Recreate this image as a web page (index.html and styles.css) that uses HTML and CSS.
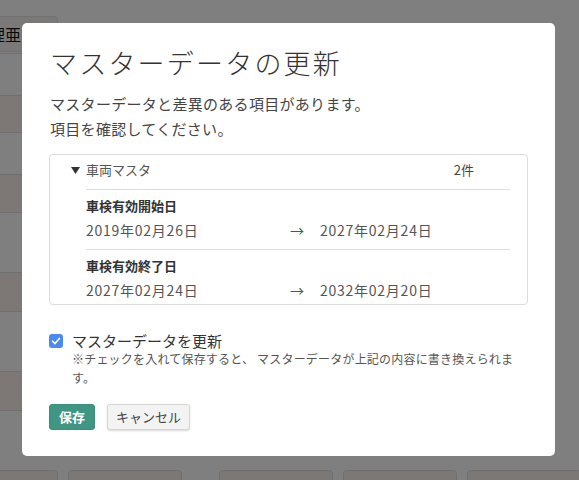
FILE: index.html
```html
<!DOCTYPE html>
<html lang="ja">
<head>
<meta charset="utf-8">
<title>マスターデータの更新</title>
<link rel="stylesheet" href="styles.css">
</head>
<body>
<div class="page">
  <div class="toolbar">
    <div class="bg-btn">整理亜</div>
  </div>
  <div class="table">
    <div class="row r42"></div>
    <div class="row r37 alt"></div>
    <div class="row r42"></div>
    <div class="row r38 alt"></div>
    <div class="row r60"></div>
    <div class="row r39 alt"></div>
    <div class="row r60"></div>
    <div class="row r39 alt"></div>
    <div class="row r50"></div>
  </div>
  <div class="bottom-bar">
    <div class="bb bb-first"></div>
    <div class="bb"></div>
    <div class="bb bb-spaced"></div>
    <div class="bb"></div>
    <div class="bb"></div>
  </div>
</div>

<div class="overlay"></div>

<div class="modal">
  <h1 class="title">マスターデータの更新</h1>
  <p class="desc">マスターデータと差異のある項目があります。<br>項目を確認してください。</p>

  <div class="diff-box">
    <div class="diff-head">
      <svg class="caret" width="9" height="7" viewBox="0 0 9 7"><polygon points="0,0 9,0 4.5,7" fill="#333"/></svg>
      <span class="group">車両マスタ</span>
      <span class="count">2件</span>
    </div>
    <div class="diff-list">
      <div class="diff-item">
        <div class="field">車検有効開始日</div>
        <div class="values">
          <span class="old">2019年02月26日</span>
          <span class="arrow">→</span>
          <span class="new">2027年02月24日</span>
        </div>
      </div>
      <div class="diff-item">
        <div class="field">車検有効終了日</div>
        <div class="values">
          <span class="old">2027年02月24日</span>
          <span class="arrow">→</span>
          <span class="new">2032年02月20日</span>
        </div>
      </div>
    </div>
  </div>

  <div class="check">
    <span class="checkbox">
      <svg width="14" height="14" viewBox="0 0 14 14"><polyline points="3.6,7.2 6,9.6 10.4,4.4" fill="none" stroke="#fff" stroke-width="1.6" stroke-linecap="round" stroke-linejoin="round"/></svg>
    </span>
    <div class="check-text">
      <div class="check-label">マスターデータを更新</div>
      <div class="check-note">※チェックを入れて保存すると、 マスターデータが上記の内容に書き換えられます。</div>
    </div>
  </div>

  <div class="actions">
    <button class="btn btn-save">保存</button>
    <button class="btn btn-cancel">キャンセル</button>
  </div>
</div>
</body>
</html>
```

FILE: styles.css
```css
html, body {
  margin: 0;
  padding: 0;
  background: #fff;
  font-family: "Noto Sans CJK JP", "Noto Sans", sans-serif;
  overflow: hidden;
}

.page {
  width: 579px;
  height: 480px;
  overflow: hidden;
}

.toolbar {
  height: 53px;
  padding-top: 16px;
  box-sizing: border-box;
}

.bg-btn {
  width: 98px;
  height: 36px;
  margin-left: -40px;
  box-sizing: border-box;
  border: 1px solid #e2e2e2;
  border-radius: 4px;
  background: #f4f2f0;
  font-size: 16px;
  line-height: 34px;
  color: #111;
  padding-left: 12px;
  white-space: nowrap;
}

.table {
  width: 300px;
}

.row {
  border-top: 1px solid #dedede;
  box-sizing: border-box;
  background: #fff;
}

.row.alt { background: #faf1ea; }

.r37 { height: 37px; }
.r38 { height: 38px; }
.r39 { height: 39px; }
.r42 { height: 42px; }
.r50 { height: 50px; }
.r60 { height: 60px; }

.bottom-bar {
  display: flex;
  gap: 10px;
  margin-top: 10px;
}

.bb {
  flex: 0 0 114px;
  height: 40px;
  box-sizing: border-box;
  border: 1px solid #dcdcdc;
  border-radius: 4px;
  background: #f8f1ea;
}

.bb-first {
  flex-basis: 68px;
  margin-left: -10px;
}

.bb-spaced { margin-left: 27px; }

.overlay {
  position: fixed;
  inset: 0;
  background: rgba(0, 0, 0, 0.5);
}

.modal {
  position: fixed;
  left: 22px;
  top: 23px;
  width: 533px;
  box-sizing: border-box;
  padding: 24px 27px 26px 27px;
  background: #fff;
  border-radius: 5px;
  color: #333;
}

.title {
  margin: 0;
  font-size: 27px;
  font-weight: 300;
  letter-spacing: 2.2px;
  line-height: 32px;
  color: #333;
  padding-left: 1px;
}

.desc {
  margin: 12px 0 0 0;
  font-size: 15px;
  line-height: 25px;
  letter-spacing: 0.3px;
  color: #444;
  padding-left: 1px;
}

.diff-box {
  margin-top: 13px;
  border: 1px solid #dcdcdc;
  border-radius: 4px;
}

.diff-head {
  display: flex;
  align-items: center;
  padding: 4px 53px 8px 21px;
  line-height: 22px;
  font-size: 13px;
  color: #555;
}

.caret {
  flex: none;
  margin-right: 6px;
}

.group { flex: 1; }

.count { color: #444; }

.diff-list {
  margin: 0 17px 0 36px;
}

.diff-item {
  border-top: 1px solid #dcdcdc;
  padding: 6px 0 9px 0;
}

.diff-item:last-child { padding-bottom: 4px; }

.field {
  font-size: 13px;
  font-weight: 700;
  line-height: 20px;
  color: #333;
}

.values {
  display: grid;
  grid-template-columns: 204px 30px auto;
  margin-top: 4px;
  font-size: 14px;
  line-height: 20px;
  color: #555;
  letter-spacing: 0.75px;
}

.arrow {
  letter-spacing: 0;
}

.check {
  display: flex;
  gap: 9px;
  margin-top: 28px;
}

.checkbox {
  flex: none;
  width: 14px;
  height: 14px;
  margin-top: 1px;
  border-radius: 3px;
  background: #4b89f2;
  display: block;
}

.checkbox svg { display: block; }

.check-text { flex: 1; }

.check-label {
  font-size: 15px;
  line-height: 16px;
  color: #333;
}

.check-note {
  font-size: 12px;
  line-height: 19px;
  letter-spacing: 0.2px;
  color: #555;
}

.actions {
  display: flex;
  gap: 12px;
  margin-top: 17px;
}

.btn {
  height: 26px;
  padding: 0 9px;
  border-radius: 3px;
  font-family: "Noto Sans CJK JP", "Noto Sans", sans-serif;
  font-size: 13px;
  line-height: 24px;
  cursor: pointer;
}

.btn-save {
  background: #3f9683;
  border: 1px solid #3a8f7c;
  color: #fff;
  font-weight: 700;
}

.btn-cancel {
  background: #f3f3f4;
  border: 1px solid #d6d6d6;
  color: #444;
  box-shadow: 0 1px 2px rgba(0, 0, 0, 0.15);
  padding: 0 8px;
}
```
